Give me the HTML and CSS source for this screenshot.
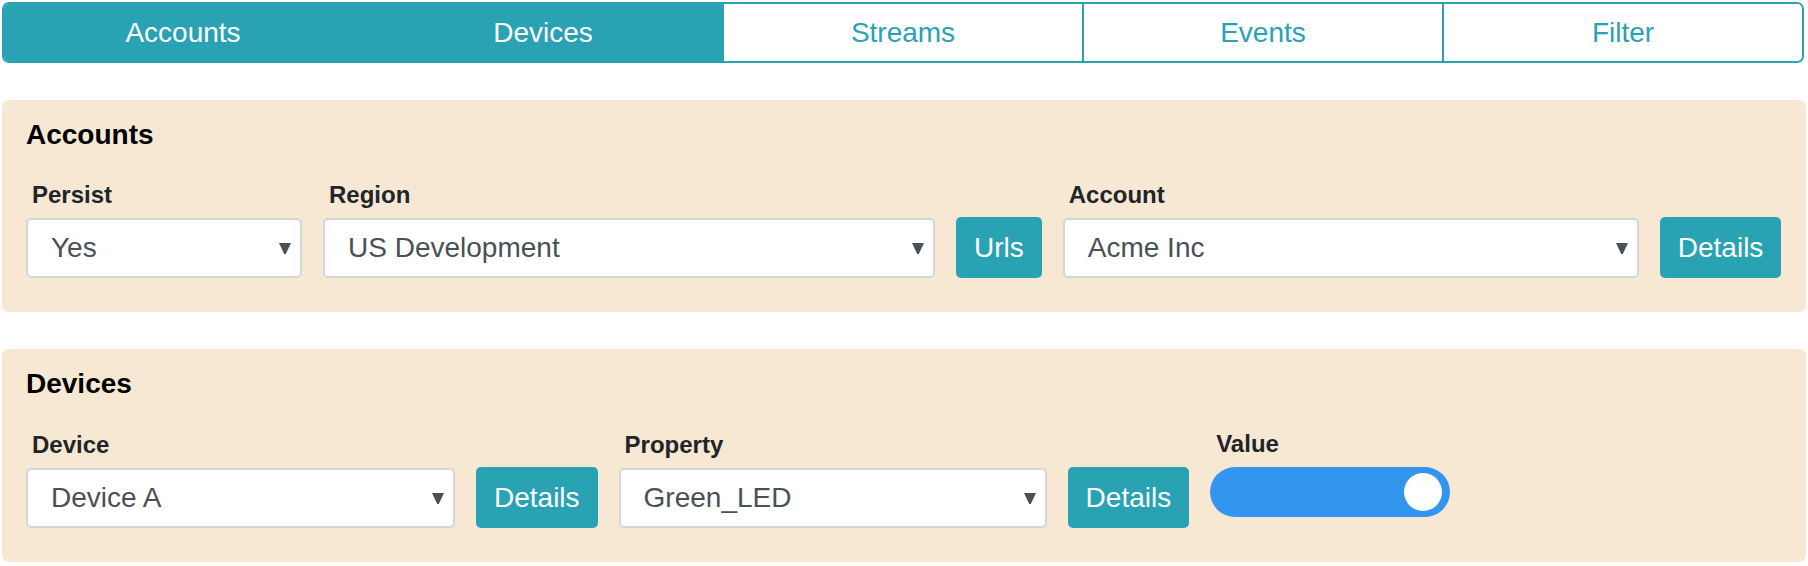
FILE: index.html
```html
<!DOCTYPE html>
<html>
<head>
<meta charset="utf-8">
<link rel="stylesheet" href="styles.css">
</head>
<body>
<div class="page">
  <nav class="tabs">
    <div class="tab active">Accounts</div>
    <div class="tab active">Devices</div>
    <div class="tab">Streams</div>
    <div class="tab">Events</div>
    <div class="tab">Filter</div>
  </nav>

  <section class="panel">
    <h2 class="panel-title">Accounts</h2>
    <div class="row">
      <div class="field w-persist">
        <label class="label">Persist</label>
        <div class="select"><span class="value">Yes</span><svg class="caret" viewBox="0 0 12 11"><polygon points="0,0 12,0 6.8,11 5.2,11"/></svg></div>
      </div>
      <div class="field w-region">
        <label class="label">Region</label>
        <div class="select"><span class="value">US Development</span><svg class="caret" viewBox="0 0 12 11"><polygon points="0,0 12,0 6.8,11 5.2,11"/></svg></div>
      </div>
      <button class="btn">Urls</button>
      <div class="field w-account">
        <label class="label">Account</label>
        <div class="select"><span class="value">Acme Inc</span><svg class="caret" viewBox="0 0 12 11"><polygon points="0,0 12,0 6.8,11 5.2,11"/></svg></div>
      </div>
      <button class="btn">Details</button>
    </div>
  </section>

  <section class="panel">
    <h2 class="panel-title">Devices</h2>
    <div class="row">
      <div class="field w-device">
        <label class="label">Device</label>
        <div class="select"><span class="value">Device A</span><svg class="caret" viewBox="0 0 12 11"><polygon points="0,0 12,0 6.8,11 5.2,11"/></svg></div>
      </div>
      <button class="btn">Details</button>
      <div class="field w-property">
        <label class="label">Property</label>
        <div class="select"><span class="value">Green_LED</span><svg class="caret" viewBox="0 0 12 11"><polygon points="0,0 12,0 6.8,11 5.2,11"/></svg></div>
      </div>
      <button class="btn">Details</button>
      <div class="field">
        <label class="label">Value</label>
        <div class="toggle on"><span class="knob"></span></div>
      </div>
    </div>
  </section>
</div>
</body>
</html>
```

FILE: styles.css
```css
* { box-sizing: border-box; }

html, body {
  margin: 0;
  padding: 0;
  background: #ffffff;
  font-family: "Liberation Sans", Arial, sans-serif;
}

.page {
  padding: 2px 2px 0 2px;
  display: flex;
  flex-direction: column;
  gap: 37px;
}

.tabs {
  display: flex;
  height: 61px;
  border: 2px solid #29a2b4;
  border-radius: 7px;
  overflow: hidden;
  margin-right: 2px;
}

.tab {
  flex: 1 1 0;
  display: flex;
  align-items: center;
  justify-content: center;
  font-size: 28px;
  color: #29a2b4;
  background: #ffffff;
  border-left: 2px solid #29a2b4;
}

.tab:first-child { border-left: none; }

.tab.active {
  background: #29a2b4;
  color: #ffffff;
}

.panel {
  background: #f7e8d3;
  border-radius: 7px;
  padding: 19px 24px 34px 24px;
}

.panel-title {
  margin: 0 0 30px 0;
  font-size: 28px;
  line-height: 32px;
  font-weight: bold;
  color: #000000;
}

.row {
  display: flex;
  align-items: flex-end;
  gap: 21px;
}

.field {
  display: flex;
  flex-direction: column;
}

.label {
  font-size: 24px;
  line-height: 28px;
  font-weight: bold;
  color: #212529;
  padding-left: 6px;
  margin-bottom: 9px;
}

.w-persist { width: 276px; }
.w-region { width: 612px; }
.w-account { width: 576px; }
.w-device { width: 429px; }
.w-property { width: 428px; }

.select {
  height: 60px;
  background: #ffffff;
  border: 2px solid #d3d6db;
  border-radius: 5px;
  display: flex;
  align-items: center;
  justify-content: space-between;
  padding: 0 9px 0 23px;
  font-size: 28px;
  color: #495057;
}

.caret {
  width: 12px;
  height: 11px;
  fill: #495057;
}

.btn {
  height: 61px;
  padding: 0 18px;
  border: none;
  border-radius: 5px;
  background: #29a2b4;
  color: #ffffff;
  font-family: "Liberation Sans", Arial, sans-serif;
  font-size: 28px;
}

.toggle {
  width: 240px;
  height: 50px;
  border-radius: 25px;
  background: #3296ee;
  display: flex;
  align-items: center;
  justify-content: flex-end;
  padding-right: 8px;
  margin-bottom: 11px;
}

.knob {
  width: 38px;
  height: 38px;
  border-radius: 50%;
  background: #ffffff;
}
```
